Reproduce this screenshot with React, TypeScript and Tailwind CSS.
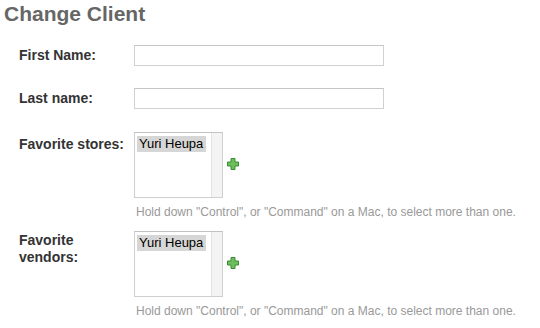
import React from "react";

const font = { fontFamily: '"Liberation Sans", Arial, sans-serif' };

function AddIcon() {
  return (
    <svg width="12" height="12" viewBox="0 0 12 12" className="ml-[4px] mb-[28px] shrink-0">
      <path
        d="M4 0.5h4v3.5h3.5v4H8v3.5H4V8H0.5V4H4z"
        fill="#6bbf5c"
        stroke="#3d8b35"
        strokeWidth="1"
        strokeLinejoin="round"
      />
    </svg>
  );
}

function MultiSelect() {
  return (
    <div className="flex items-end">
      <div className="flex w-[89px] h-[66px] border border-[#cfcfcf] border-t-[#c2c2c2] bg-white">
        <div className="flex-1 pl-[2px] pt-[3px]">
          <div className="bg-[#d6d6d6] text-[13px] leading-[16px] text-black pl-[2px] w-fit pr-[3px]">
            Yuri Heupa
          </div>
        </div>
        <div className="w-[11px] bg-[#f4f4f4] border-l border-[#e3e3e3]" />
      </div>
      <AddIcon />
    </div>
  );
}

function Help() {
  return (
    <p className="mt-[7px] ml-[2px] text-[12px] leading-[15px] text-[#999]">
      Hold down "Control", or "Command" on a Mac, to select more than one.
    </p>
  );
}

export default function App() {
  return (
    <div className="w-[540px] h-[328px] bg-white overflow-hidden" style={font}>
      <h1 className="pl-[4px] pt-[2px] text-[21px] leading-[24px] font-bold text-[#666]">
        Change Client
      </h1>

      <div className="flex pl-[19px] mt-[19px]">
        <label className="w-[115px] pt-[2px] text-[14px] leading-[16px] font-bold text-[#333]">
          First Name:
        </label>
        <div className="w-[250px] h-[21px] border border-[#d0d0d0] border-t-[#c4c4c4] bg-white" />
      </div>

      <div className="flex pl-[19px] mt-[22px]">
        <label className="w-[115px] pt-[2px] text-[14px] leading-[16px] font-bold text-[#333]">
          Last name:
        </label>
        <div className="w-[250px] h-[21px] border border-[#d0d0d0] border-t-[#c4c4c4] bg-white" />
      </div>

      <div className="flex pl-[19px] mt-[23px]">
        <label className="w-[115px] pt-[4px] text-[14px] leading-[16px] font-bold text-[#333]">
          Favorite stores:
        </label>
        <div>
          <MultiSelect />
          <Help />
        </div>
      </div>

      <div className="flex pl-[19px] mt-[11px]">
        <label className="w-[115px] pt-[1px] text-[14px] leading-[17px] font-bold text-[#333]">
          Favorite
          <br />
          vendors:
        </label>
        <div>
          <MultiSelect />
          <Help />
        </div>
      </div>
    </div>
  );
}
